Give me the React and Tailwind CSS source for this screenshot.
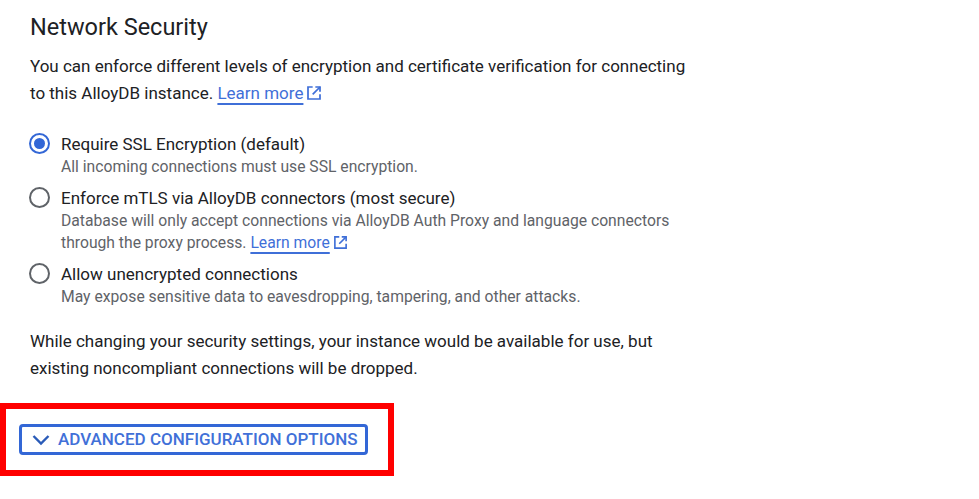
import React from "react";

const ExternalIcon = ({ small }) => (
    <svg viewBox="0 0 24 24" className={`inline-block ml-[3px] ${small ? "w-[15px] h-[15px] align-[-2px]" : "w-[16px] h-[16px] align-[-2px]"}`} fill="none" stroke="#3f6fd8" strokeWidth="2.6">
        <path d="M10 3H3v18h18v-7" />
        <path d="M14 3h7v7" />
        <path d="M21 3 10 14" />
    </svg>
);

const LearnMore = ({ small }) => (
    <a className="text-[#3f6fd8] underline decoration-[1.5px] underline-offset-[4px]">Learn more<ExternalIcon small={small} /></a>
);

const Radio = ({ checked }) => (
    <div className={`w-[21px] h-[21px] mt-[1px] -ml-[1px] rounded-full border-[2.5px] flex items-center justify-center shrink-0 ${checked ? "border-[#3367d6]" : "border-[#5f6368]"}`}>
        {checked && <div className="w-[11px] h-[11px] rounded-full bg-[#3367d6]" />}
    </div>
);

const options = [
    { title: "Require SSL Encryption (default)", body: "All incoming connections must use SSL encryption.", checked: true },
    { title: "Enforce mTLS via AlloyDB connectors (most secure)", body: "Database will only accept connections via AlloyDB Auth Proxy and language connectors", hasLink: true },
    { title: "Allow unencrypted connections", body: "May expose sensitive data to eavesdropping, tampering, and other attacks." },
];

export default function App() {
    return (
        <div className="w-[979px] h-[499px] bg-white overflow-hidden pl-[30px] pt-[12px] font-['Roboto',sans-serif] text-[#202124]">
            <h1 className="text-[23.5px] leading-[30px]">Network Security</h1>
            <p className="mt-[11px] text-[17px] leading-[27px]">
                You can enforce different levels of encryption and certificate verification for connecting<br />
                to this AlloyDB instance. <LearnMore />
            </p>
            <div className="mt-[25px] flex flex-col gap-[8px]">
                {options.map((option) => (
                    <div key={option.title} className="flex gap-[11px]">
                        <Radio checked={option.checked} />
                        <div>
                            <div className="text-[17px] leading-[24px]">{option.title}</div>
                            <div className="text-[15.7px] leading-[22px] text-[#5f6368]">
                                {option.body}
                                {option.hasLink && <><br />through the proxy process. <LearnMore small /></>}
                            </div>
                        </div>
                    </div>
                ))}
            </div>
            <p className="mt-[20px] text-[17px] leading-[27px]">
                While changing your security settings, your instance would be available for use, but<br />
                existing noncompliant connections will be dropped.
            </p>
            <div className="mt-[21px] -ml-[30px] w-[394px] h-[73px] border-[6px] border-[#ff0000] flex items-center pl-[13px]">
                <div className="w-[349px] h-[31px] rounded-[4px] border-[3px] border-[#3367d6] flex items-center pl-[10px] gap-[8px] text-[#4170d8] text-[17px] font-medium">
                    <svg viewBox="0 0 18 12" className="w-[18px] h-[12px]" fill="none" stroke="#2a5bb8" strokeWidth="2.4"><path d="M1.5 2 9 9.5 16.5 2" /></svg>
                    ADVANCED CONFIGURATION OPTIONS
                </div>
            </div>
        </div>
    );
}
